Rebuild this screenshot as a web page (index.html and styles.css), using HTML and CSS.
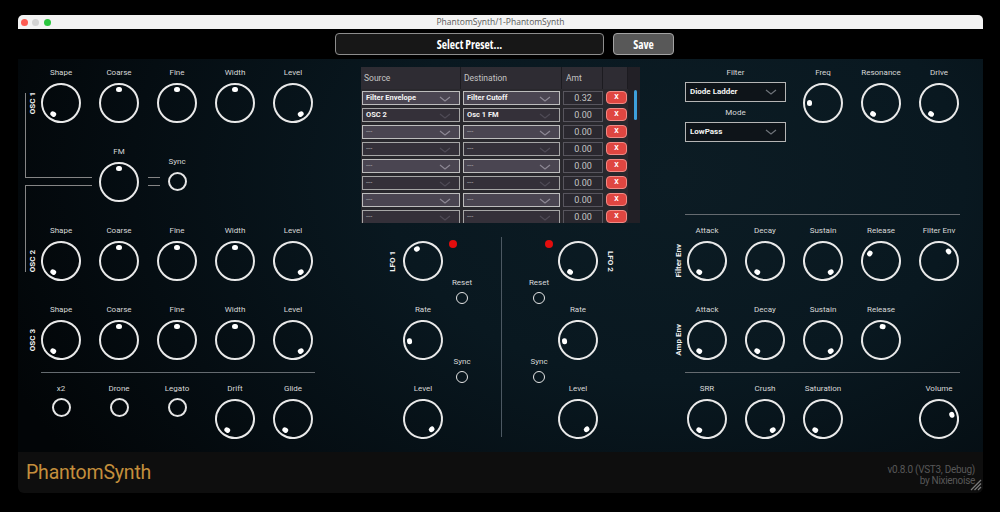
FILE: index.html
```html
<!DOCTYPE html>
<html>
<head>
<meta charset="utf-8">
<title>PhantomSynth</title>
<link rel="stylesheet" href="styles.css">
</head>
<body>
<div class="window">
  <div class="titlebar">
    <div class="lights"><i class="red"></i><i class="grey"></i><i class="green"></i></div>
    <div class="title">PhantomSynth/1-PhantomSynth</div>
    <div></div>
  </div>
  <div class="toolbar">
    <div class="preset">Select Preset...</div>
    <div class="save">Save</div>
  </div>
  <div class="main">
    <section class="left">
      <div class="bracket b1"></div>
      <div class="bracket b2"></div>
      <div class="dash"></div>
      <div class="row">
        <div class="side"><span>OSC 1</span></div>
        <div class="knobs">
          <div class="k"><span class="lb">Shape</span><div class="knob" style="--a:-145deg"><i></i></div></div>
          <div class="k"><span class="lb">Coarse</span><div class="knob" style="--a:0deg"><i></i></div></div>
          <div class="k"><span class="lb">Fine</span><div class="knob" style="--a:0deg"><i></i></div></div>
          <div class="k"><span class="lb">Width</span><div class="knob" style="--a:0deg"><i></i></div></div>
          <div class="k"><span class="lb">Level</span><div class="knob" style="--a:145deg"><i></i></div></div>
        </div>
      </div>
      <div class="row gap24">
        <div class="side"></div>
        <div class="knobs">
          <div class="k"></div>
          <div class="k"><span class="lb">FM</span><div class="knob" style="--a:0deg"><i></i></div></div>
          <div class="t mid"><span class="lb">Sync</span><div class="tg"></div></div>
        </div>
      </div>
      <div class="row gap24">
        <div class="side"><span>OSC 2</span></div>
        <div class="knobs">
          <div class="k"><span class="lb">Shape</span><div class="knob" style="--a:-145deg"><i></i></div></div>
          <div class="k"><span class="lb">Coarse</span><div class="knob" style="--a:0deg"><i></i></div></div>
          <div class="k"><span class="lb">Fine</span><div class="knob" style="--a:0deg"><i></i></div></div>
          <div class="k"><span class="lb">Width</span><div class="knob" style="--a:0deg"><i></i></div></div>
          <div class="k"><span class="lb">Level</span><div class="knob" style="--a:145deg"><i></i></div></div>
        </div>
      </div>
      <div class="row gap24">
        <div class="side"><span>OSC 3</span></div>
        <div class="knobs">
          <div class="k"><span class="lb">Shape</span><div class="knob" style="--a:-145deg"><i></i></div></div>
          <div class="k"><span class="lb">Coarse</span><div class="knob" style="--a:0deg"><i></i></div></div>
          <div class="k"><span class="lb">Fine</span><div class="knob" style="--a:0deg"><i></i></div></div>
          <div class="k"><span class="lb">Width</span><div class="knob" style="--a:0deg"><i></i></div></div>
          <div class="k"><span class="lb">Level</span><div class="knob" style="--a:145deg"><i></i></div></div>
        </div>
      </div>
      <div class="sep sep-left"></div>
      <div class="row gap11">
        <div class="side"></div>
        <div class="knobs">
          <div class="t"><span class="lb">x2</span><div class="tg"></div></div>
          <div class="t"><span class="lb">Drone</span><div class="tg"></div></div>
          <div class="t"><span class="lb">Legato</span><div class="tg"></div></div>
          <div class="k"><span class="lb">Drift</span><div class="knob" style="--a:-145deg"><i></i></div></div>
          <div class="k"><span class="lb">Glide</span><div class="knob" style="--a:-145deg"><i></i></div></div>
        </div>
      </div>
    </section>

    <section class="center">
      <div class="matrix">
        <div class="mhead">
          <div class="hc c-src">Source</div>
          <div class="hc c-dst">Destination</div>
          <div class="hc c-amt">Amt</div>
          <div class="hc c-del"></div>
          <div class="hc c-scr"></div>
        </div>
        <div class="mbody">
          <div class="mrows">
            <div class="mrow odd">
              <div class="combo m-src">Filter Envelope<svg class="chev" viewBox="0 0 12 6"><polyline points="1,1 6,5 11,1"/></svg></div>
              <div class="combo m-dst">Filter Cutoff<svg class="chev" viewBox="0 0 12 6"><polyline points="1,1 6,5 11,1"/></svg></div>
              <div class="amt">0.32</div>
              <div class="del">X</div>
            </div>
            <div class="mrow even">
              <div class="combo m-src">OSC 2<svg class="chev" viewBox="0 0 12 6"><polyline points="1,1 6,5 11,1"/></svg></div>
              <div class="combo m-dst">Osc 1 FM<svg class="chev" viewBox="0 0 12 6"><polyline points="1,1 6,5 11,1"/></svg></div>
              <div class="amt">0.00</div>
              <div class="del">X</div>
            </div>
            <div class="mrow odd">
              <div class="combo m-src dim">---<svg class="chev" viewBox="0 0 12 6"><polyline points="1,1 6,5 11,1"/></svg></div>
              <div class="combo m-dst dim">---<svg class="chev" viewBox="0 0 12 6"><polyline points="1,1 6,5 11,1"/></svg></div>
              <div class="amt">0.00</div>
              <div class="del">X</div>
            </div>
            <div class="mrow even">
              <div class="combo m-src dim">---<svg class="chev" viewBox="0 0 12 6"><polyline points="1,1 6,5 11,1"/></svg></div>
              <div class="combo m-dst dim">---<svg class="chev" viewBox="0 0 12 6"><polyline points="1,1 6,5 11,1"/></svg></div>
              <div class="amt">0.00</div>
              <div class="del">X</div>
            </div>
            <div class="mrow odd">
              <div class="combo m-src dim">---<svg class="chev" viewBox="0 0 12 6"><polyline points="1,1 6,5 11,1"/></svg></div>
              <div class="combo m-dst dim">---<svg class="chev" viewBox="0 0 12 6"><polyline points="1,1 6,5 11,1"/></svg></div>
              <div class="amt">0.00</div>
              <div class="del">X</div>
            </div>
            <div class="mrow even">
              <div class="combo m-src dim">---<svg class="chev" viewBox="0 0 12 6"><polyline points="1,1 6,5 11,1"/></svg></div>
              <div class="combo m-dst dim">---<svg class="chev" viewBox="0 0 12 6"><polyline points="1,1 6,5 11,1"/></svg></div>
              <div class="amt">0.00</div>
              <div class="del">X</div>
            </div>
            <div class="mrow odd">
              <div class="combo m-src dim">---<svg class="chev" viewBox="0 0 12 6"><polyline points="1,1 6,5 11,1"/></svg></div>
              <div class="combo m-dst dim">---<svg class="chev" viewBox="0 0 12 6"><polyline points="1,1 6,5 11,1"/></svg></div>
              <div class="amt">0.00</div>
              <div class="del">X</div>
            </div>
            <div class="mrow even">
              <div class="combo m-src dim">---<svg class="chev" viewBox="0 0 12 6"><polyline points="1,1 6,5 11,1"/></svg></div>
              <div class="combo m-dst dim">---<svg class="chev" viewBox="0 0 12 6"><polyline points="1,1 6,5 11,1"/></svg></div>
              <div class="amt">0.00</div>
              <div class="del">X</div>
            </div>
          </div>
          <div class="scroll"><i></i></div>
        </div>
      </div>

      <div class="lfos">
        <div class="lfo">
          <div class="lside"><span class="up">LFO 1</span></div>
          <div class="kcol">
            <div class="k nolabel"><div class="knob" style="--a:-27deg"><i></i></div></div>
            <div class="k gap24"><span class="lb">Rate</span><div class="knob" style="--a:-95deg"><i></i></div></div>
            <div class="k gap24"><span class="lb">Level</span><div class="knob" style="--a:140deg"><i></i></div></div>
          </div>
          <div class="tcol">
            <div class="led led-l"></div>
            <div class="t small reset"><span class="lb">Reset</span><div class="tg"></div></div>
            <div class="t small sync"><span class="lb">Sync</span><div class="tg"></div></div>
          </div>
        </div>
        <div class="divider"></div>
        <div class="lfo lfo2">
          <div class="tcol">
            <div class="led led-r"></div>
            <div class="t small reset"><span class="lb">Reset</span><div class="tg"></div></div>
            <div class="t small sync"><span class="lb">Sync</span><div class="tg"></div></div>
          </div>
          <div class="kcol">
            <div class="k nolabel"><div class="knob" style="--a:-144deg"><i></i></div></div>
            <div class="k gap24"><span class="lb">Rate</span><div class="knob" style="--a:-95deg"><i></i></div></div>
            <div class="k gap24"><span class="lb">Level</span><div class="knob" style="--a:140deg"><i></i></div></div>
          </div>
          <div class="lside"><span class="down">LFO 2</span></div>
        </div>
      </div>
    </section>

    <section class="right">
      <div class="row top">
        <div class="side"></div>
        <div class="filterbox">
          <span class="lb">Filter</span>
          <div class="fcombo">Diode Ladder<svg class="chev" viewBox="0 0 12 6"><polyline points="1,1 6,5 11,1"/></svg></div>
          <span class="lb mode">Mode</span>
          <div class="fcombo">LowPass<svg class="chev" viewBox="0 0 12 6"><polyline points="1,1 6,5 11,1"/></svg></div>
        </div>
        <div class="knobs fknobs">
          <div class="k"><span class="lb">Freq</span><div class="knob" style="--a:-90deg"><i></i></div></div>
          <div class="k"><span class="lb">Resonance</span><div class="knob" style="--a:-144deg"><i></i></div></div>
          <div class="k"><span class="lb">Drive</span><div class="knob" style="--a:-144deg"><i></i></div></div>
        </div>
      </div>
      <div class="sep sep-right sep-top"></div>
      <div class="row gap11">
        <div class="side"><span>Filter Env</span></div>
        <div class="knobs">
          <div class="k"><span class="lb">Attack</span><div class="knob" style="--a:-145deg"><i></i></div></div>
          <div class="k"><span class="lb">Decay</span><div class="knob" style="--a:-145deg"><i></i></div></div>
          <div class="k"><span class="lb">Sustain</span><div class="knob" style="--a:145deg"><i></i></div></div>
          <div class="k"><span class="lb">Release</span><div class="knob" style="--a:-56deg"><i></i></div></div>
          <div class="k"><span class="lb">Filter Env</span><div class="knob" style="--a:45deg"><i></i></div></div>
        </div>
      </div>
      <div class="row gap24">
        <div class="side"><span>Amp Env</span></div>
        <div class="knobs">
          <div class="k"><span class="lb">Attack</span><div class="knob" style="--a:-145deg"><i></i></div></div>
          <div class="k"><span class="lb">Decay</span><div class="knob" style="--a:-145deg"><i></i></div></div>
          <div class="k"><span class="lb">Sustain</span><div class="knob" style="--a:145deg"><i></i></div></div>
          <div class="k"><span class="lb">Release</span><div class="knob" style="--a:7deg"><i></i></div></div>
        </div>
      </div>
      <div class="sep sep-right"></div>
      <div class="row gap11">
        <div class="side"></div>
        <div class="knobs">
          <div class="k"><span class="lb">SRR</span><div class="knob" style="--a:-145deg"><i></i></div></div>
          <div class="k"><span class="lb">Crush</span><div class="knob" style="--a:145deg"><i></i></div></div>
          <div class="k"><span class="lb">Saturation</span><div class="knob" style="--a:-145deg"><i></i></div></div>
          <div class="k"></div>
          <div class="k"><span class="lb">Volume</span><div class="knob" style="--a:72deg"><i></i></div></div>
        </div>
      </div>
    </section>
  </div>
  <div class="footer">
    <div class="brand">PhantomSynth</div>
    <div class="version">v0.8.0 (VST3, Debug)<br>by Nixienoise</div>
    <svg class="grip" viewBox="0 0 12 12"><line x1="1" y1="11" x2="11" y2="1"/><line x1="4.5" y1="11" x2="11" y2="4.5"/><line x1="8" y1="11" x2="11" y2="8"/></svg>
  </div>
</div>
</body>
</html>
```

FILE: styles.css
```css
* { box-sizing: border-box; }

html, body {
  margin: 0;
  background: #000;
}

body {
  width: 1000px;
  height: 512px;
  overflow: hidden;
  font-family: Roboto, "Liberation Sans", sans-serif;
  color: #ddd;
}

.window {
  margin: 15px 0 0 18px;
  width: 965px;
}

/* title bar */
.titlebar {
  height: 14px;
  background: #f3f3f3;
  border-radius: 5px 5px 0 0;
  display: grid;
  grid-template-columns: 1fr auto 1fr;
  align-items: center;
}
.lights { display: flex; gap: 4.5px; padding-left: 2.5px; }
.lights i { display: block; width: 7px; height: 7px; border-radius: 50%; }
.red { background: #fd5b52; }
.grey { background: #d3d3d3; }
.green { background: #2bc63f; }
.title {
  font-family: "Open Sans", Roboto, sans-serif;
  font-size: 8.5px;
  color: #5a5a5a;
  line-height: 14px;
}

/* toolbar */
.toolbar {
  height: 30px;
  background: #000;
  display: flex;
  align-items: center;
  padding-left: 317px;
}
.preset, .save {
  height: 22px;
  border-radius: 4px;
  display: flex;
  align-items: center;
  justify-content: center;
  color: #fff;
  font-family: "Open Sans", Roboto, sans-serif;
  font-weight: 700;
  font-size: 11.5px;
  font-stretch: 80%;
}
.preset {
  width: 269px;
  border: 1px solid #8d8d8d;
  background: #171717;
}
.save {
  margin-left: 9px;
  width: 61px;
  border: 1px solid #a3a3a3;
  background: #585858;
}

/* main panel */
.main {
  height: 393px;
  display: flex;
  background: radial-gradient(ellipse 75% 130% at 68% 30%, #0c1c24 0%, #091820 40%, #050d12 75%, #020507 100%);
}

.left {
  position: relative;
  width: 322px;
  padding: 9px 0 0 7px;
  display: flex;
  flex-direction: column;
}
.center {
  width: 320px;
  display: flex;
  flex-direction: column;
}
.right {
  width: 323px;
  padding: 9px 0 0 11px;
  display: flex;
  flex-direction: column;
}

.row { display: flex; align-items: flex-start; }
.gap24 { margin-top: 24px; }
.gap11 { margin-top: 11px; }

.knobs { display: flex; gap: 18px; }

.side {
  width: 16px;
  height: 55px;
  padding-top: 15px;
  display: flex;
  align-items: center;
  justify-content: center;
  flex: none;
}
.side span {
  writing-mode: vertical-rl;
  transform: rotate(180deg);
  font-size: 8px;
  font-weight: 700;
  color: #f2f2f2;
  white-space: nowrap;
  line-height: 10px;
}

.lb {
  display: block;
  height: 10px;
  line-height: 10px;
  font-size: 8px;
  color: #d8d8d8;
  white-space: nowrap;
  text-align: center;
}

.k {
  width: 40px;
  display: flex;
  flex-direction: column;
  align-items: center;
}
.k .lb { margin-bottom: 5px; }
.k.nolabel { margin-top: 15px; }

.knob {
  position: relative;
  width: 40px;
  height: 40px;
  border: 2px solid #e9e9e9;
  border-radius: 50%;
  transform: rotate(var(--a));
}
.knob i {
  position: absolute;
  left: 50%;
  top: 1.5px;
  width: 5.5px;
  height: 5.5px;
  margin-left: -2.75px;
  border-radius: 50%;
  background: #fff;
}

.t {
  width: 40px;
  display: flex;
  flex-direction: column;
  align-items: center;
}
.t .lb { margin-bottom: 4px; }
.t.mid { padding-top: 10px; }
.t.mid .lb { margin-bottom: 5px; }
.tg {
  width: 19px;
  height: 19px;
  border: 2px solid #e6e6e6;
  border-radius: 50%;
}

/* connector lines */
.bracket {
  position: absolute;
  left: 7px;
  width: 67px;
  border-color: #858585;
  border-style: solid;
  border-width: 0;
}
.b1 { top: 34px; height: 85px; border-left-width: 1px; border-bottom-width: 1px; }
.b2 { top: 126px; height: 87px; border-left-width: 1px; border-top-width: 1px; }
.dash {
  position: absolute;
  left: 130px;
  top: 118px;
  width: 12px;
  height: 9px;
  border-top: 1px solid #858585;
  border-bottom: 1px solid #858585;
}

.sep { height: 1px; background: #656b70; }
.sep-left { margin: 12px 0 0 16px; width: 274px; }
.sep-right { margin: 12px 0 0 14px; width: 275px; }
.sep-right.sep-top { margin-top: 72px; }

/* mod matrix */
.matrix {
  margin: 8px 0 0 21px;
  width: 279px;
  height: 156px;
  background: #1c1b20;
  overflow: hidden;
}
.mhead {
  height: 22px;
  display: flex;
  gap: 1px;
}
.hc {
  background: #2e2c33;
  font-size: 8.5px;
  color: #c4c4c4;
  line-height: 22px;
  padding-left: 3px;
}
.c-src { width: 99px; }
.c-dst { width: 100px; }
.c-amt { width: 40px; padding-left: 4px; }
.c-del { width: 24px; }
.c-scr { width: 12px; background: #222026; }

.mbody {
  height: 134px;
  display: flex;
  background: #29282d;
}
.mrows {
  width: 267px;
  padding-top: 2px;
}
.mrow {
  height: 14px;
  margin-bottom: 3px;
  display: flex;
}
.combo {
  position: relative;
  height: 14px;
  border: 1px solid #bdbdbd;
  background: #4a4551;
  color: #f4f4f4;
  font-size: 7.5px;
  font-weight: 700;
  line-height: 12px;
  padding-left: 3px;
  white-space: nowrap;
}
.even .combo { background: #343039; border-color: #a6a6a6; }
.combo.dim { color: #a9a6ad; font-weight: 400; }
.m-src { margin-left: 1px; width: 98px; }
.m-dst { margin-left: 3px; width: 97px; }
.chev {
  position: absolute;
  right: 8px;
  top: 4px;
  width: 12px;
  height: 6px;
  fill: none;
  stroke: #8d8894;
  stroke-width: 1.2;
}
.even .chev { stroke: #4f4b56; }
.amt {
  margin-left: 3px;
  width: 40px;
  height: 14px;
  border: 1px solid #58565e;
  background: #2a282f;
  color: #c5c5c5;
  font-size: 9px;
  line-height: 12px;
  text-align: center;
}
.del {
  margin-left: 3px;
  width: 21px;
  height: 13px;
  border: 1px solid #f08a85;
  border-radius: 4px;
  background: #df4641;
  color: #fff;
  font-size: 7px;
  font-weight: 700;
  line-height: 11px;
  text-align: center;
}
.scroll {
  width: 12px;
  background: #222026;
}
.scroll i {
  display: block;
  margin: 1px 0 0 6px;
  width: 3px;
  height: 30px;
  border-radius: 2px;
  background: #3e9fdc;
}

/* LFOs */
.lfos {
  margin-top: 3px;
  padding-left: 46px;
  display: flex;
  align-items: flex-start;
}
.lfo { display: flex; align-items: flex-start; }
.lside {
  width: 12px;
  height: 40px;
  margin-top: 15px;
  display: flex;
  align-items: center;
  justify-content: center;
}
.lside span {
  writing-mode: vertical-rl;
  font-size: 8px;
  font-weight: 700;
  color: #f2f2f2;
  white-space: nowrap;
}
.lside .up { transform: rotate(180deg); }
.kcol { display: flex; flex-direction: column; margin-left: 5px; }
.tcol {
  width: 24px;
  margin-left: 7px;
  display: flex;
  flex-direction: column;
  align-items: center;
}
.lfo2 .tcol { margin-left: 0; }
.lfo2 .kcol { margin-left: 7px; }
.lfo2 .lside { margin-left: 6px; }
.led {
  width: 8px;
  height: 8px;
  border-radius: 50%;
  background: #e30d0d;
  margin-top: 14px;
}
.led-l { align-self: flex-start; margin-left: -1px; }
.led-r { align-self: flex-end; margin-right: -2px; }
.t.small { width: 24px; }
.t.small .tg { width: 12px; height: 12px; border-width: 1.5px; }
.reset { margin-top: 30px; }
.sync { margin-top: 53px; }
.divider {
  margin: 11px 25px 0 27px;
  width: 1px;
  height: 200px;
  background: #4c5862;
}

/* filter */
.filterbox {
  margin-left: -2px;
  width: 101px;
  display: flex;
  flex-direction: column;
}
.filterbox .mode { margin-top: 6px; }
.fcombo {
  position: relative;
  margin-top: 4px;
  height: 20px;
  border: 1.5px solid #b5b5b5;
  background: #0e1419;
  color: #f4f4f4;
  font-size: 8px;
  font-weight: 700;
  line-height: 17px;
  padding-left: 4px;
}
.fcombo .chev { right: 8px; top: 6px; stroke: #6f747a; }
.fknobs { margin-left: 17px; }

/* footer */
.footer {
  position: relative;
  height: 41px;
  background: #0e0e0e;
  border-radius: 0 0 6px 6px;
  display: flex;
  justify-content: space-between;
  align-items: center;
  padding: 0 8px;
}
.brand {
  font-size: 19.5px;
  color: #c48e3c;
  letter-spacing: -0.2px;
}
.version {
  margin-top: 4px;
  text-align: right;
  font-size: 10px;
  line-height: 11px;
  color: #585858;
  letter-spacing: -0.3px;
}
.grip {
  position: absolute;
  right: 1px;
  bottom: 2px;
  width: 12px;
  height: 12px;
  stroke: #7a7a7a;
  stroke-width: 1.2;
}
```
